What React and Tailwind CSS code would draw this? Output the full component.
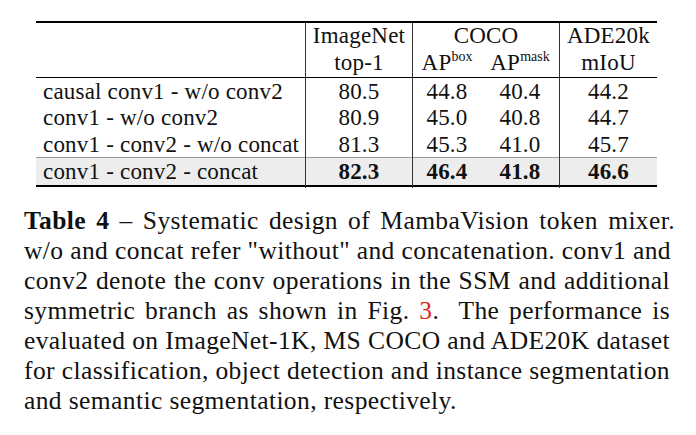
import React from "react";

const cols = "grid grid-cols-[270px_107px_68px_79px_97px]";
const vline = "border-r border-[#333]";

const rows = [
  { name: "causal conv1 - w/o conv2", vals: ["80.5", "44.8", "40.4", "44.2"], h: "h-[26px]" },
  { name: "conv1 - w/o conv2", vals: ["80.9", "45.0", "40.8", "44.7"], h: "h-[27px]" },
  { name: "conv1 - conv2 - w/o concat", vals: ["81.3", "45.3", "41.0", "45.7"], h: "h-[26px]" },
];

function Cell({ children, className = "" }) {
  return (
    <div className={`flex items-center justify-center pb-[3px] ${className}`}>
      <span>{children}</span>
    </div>
  );
}

function DataRow({ name, vals, h, bold, className = "" }) {
  return (
    <div className={`${cols} ${h} ${bold ? "font-bold" : ""} ${className}`}>
      <div className={`flex items-center pl-[7px] pb-[3px] font-normal ${vline}`}>{name}</div>
      <Cell className={vline}>{vals[0]}</Cell>
      <Cell>{vals[1]}</Cell>
      <Cell className={vline}>{vals[2]}</Cell>
      <Cell>{vals[3]}</Cell>
    </div>
  );
}

function Line({ children, last, className = "" }) {
  return (
    <span
      className={`block whitespace-nowrap ${
        last ? "text-left" : "text-justify [text-align-last:justify]"
      } ${className}`}
    >
      {children}
    </span>
  );
}

export default function App() {
  return (
    <div className="h-[435px] w-[696px] bg-white text-[#111] font-['Liberation_Serif','Times_New_Roman',serif]">
      <div className="pl-[36px] pt-[21px]">
        <div className="w-[621px] border-y-2 border-black text-[23px] leading-[27px] tracking-[0.2px]">
          <div className={`${cols} grid-rows-[27px_27px] border-b border-black`}>
            <div className={`row-span-2 ${vline}`} />
            <Cell className={vline}>ImageNet</Cell>
            <Cell className={`col-span-2 ${vline}`}>COCO</Cell>
            <Cell>ADE20k</Cell>
            <Cell className={vline}>top-1</Cell>
            <Cell>
              AP<sup className="-top-[9px] text-[14px] tracking-normal">box</sup>
            </Cell>
            <Cell className={vline}>
              AP<sup className="-top-[9px] text-[14px] tracking-normal">mask</sup>
            </Cell>
            <Cell>mIoU</Cell>
          </div>
          {rows.map((r) => (
            <DataRow key={r.name} {...r} />
          ))}
          <DataRow
            name="conv1 - conv2 - concat"
            vals={["82.3", "46.4", "41.8", "46.6"]}
            h="h-[28px]"
            bold
            className="border-t border-[#999] bg-[#ededed]"
          />
        </div>
      </div>

      <p className="ml-[24px] mt-[19px] w-[646px] text-[25.5px] leading-[30px] tracking-[0.4px]">
        <Line className="mr-[-5px]">
          <b>Table 4</b> – Systematic design of MambaVision token mixer.
        </Line>
        <Line>w/o and concat refer "without" and concatenation. conv1 and</Line>
        <Line>conv2 denote the conv operations in the SSM and additional</Line>
        <Line>
          symmetric branch as shown in Fig. <span className="text-[#e1261c]">3</span>.&nbsp; The
          performance is
        </Line>
        <Line>evaluated on ImageNet-1K, MS COCO and ADE20K dataset</Line>
        <Line>for classification, object detection and instance segmentation</Line>
        <Line last>and semantic segmentation, respectively.</Line>
      </p>
    </div>
  );
}
